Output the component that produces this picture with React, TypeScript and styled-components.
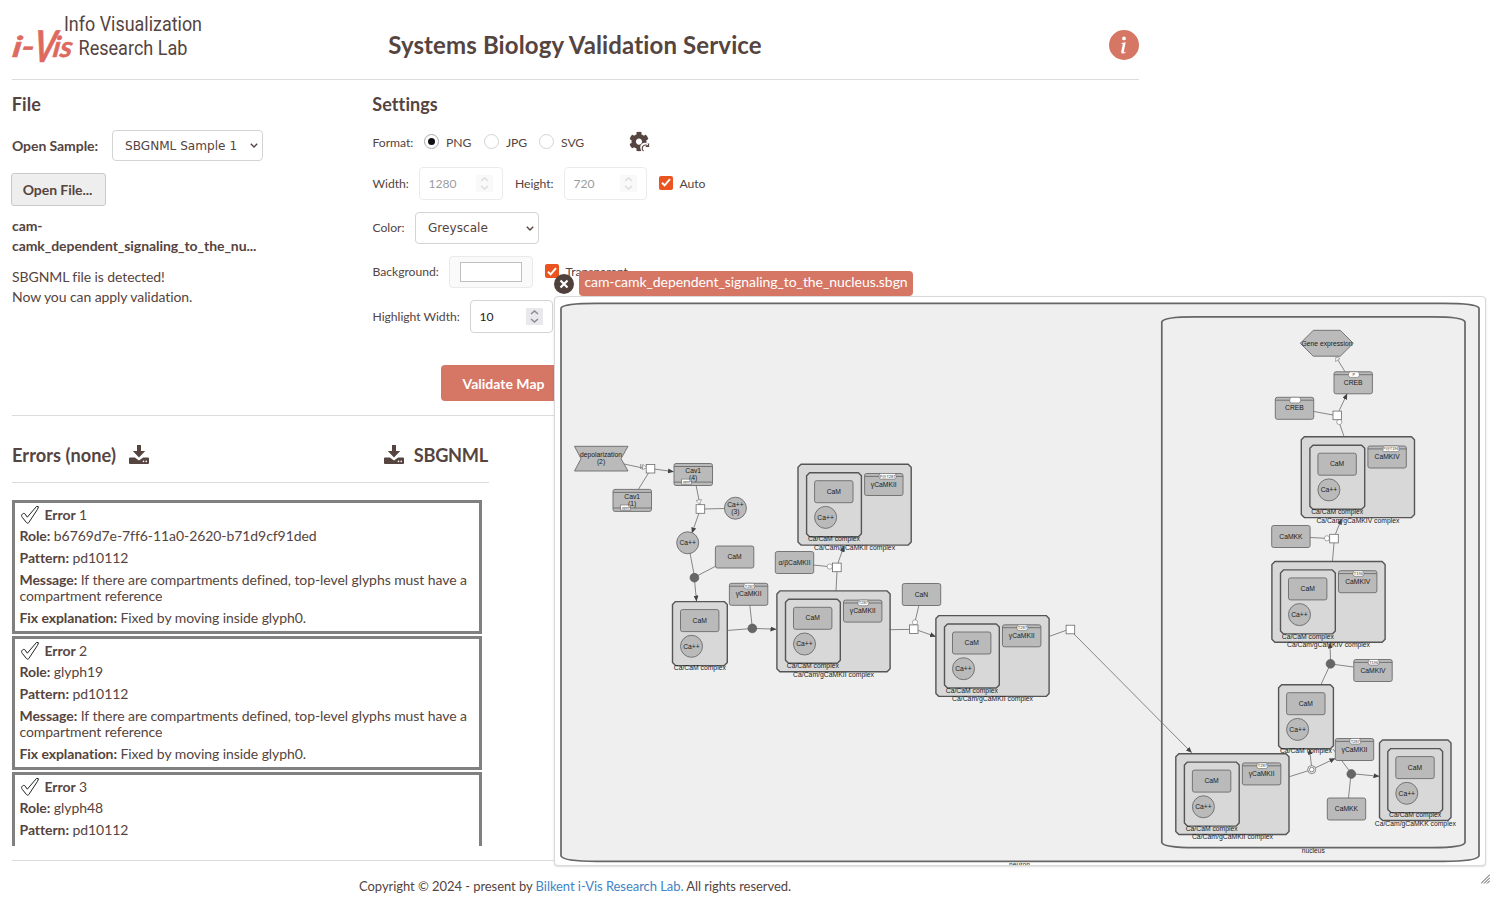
import React from 'react';
import styled, { createGlobalStyle, css } from 'styled-components';
import { BsInfoCircleFill } from 'react-icons/bs';
import { FaCog } from 'react-icons/fa';

const INK = '#554440';
const CORAL = '#d67664';

const Global = createGlobalStyle`
  *, *::before, *::after { box-sizing: border-box; }
  html, body { margin: 0; padding: 0; background: #fff; }
  body {
    width: 1490px; height: 900px; overflow: hidden; position: relative;
    font-family: Lato, "Liberation Sans", sans-serif; color: ${INK}; font-size: 14px;
    font-variant-ligatures: none; letter-spacing: -0.07px;
  }
`;

const Page = styled.div`
  width: 1139px;
  height: 900px;
  padding-left: 12px;
  display: flex;
  flex-direction: column;
`;
const Header = styled.header`
  height: 80px;
  flex: none;
  border-bottom: 1px solid #dcdcdc;
  display: grid;
  grid-template-columns: 200px 1fr 200px;
  padding-top: 10px;
`;
const Logo = styled.svg`
  display: block;
  width: 200px;
  height: 60px;
  overflow: visible;
  letter-spacing: 0;
`;
const Title = styled.h1`
  margin: 0 0 0 -1px;
  font-size: 24px;
  line-height: 70px;
  font-weight: 700;
  text-align: center;
  letter-spacing: 0.13px;
`;
const InfoButton = styled.div`
  display: flex;
  justify-content: flex-end;
  align-items: flex-start;
  padding-top: 20px;
  color: ${CORAL};
`;
const Top = styled.section`
  height: 336px;
  flex: none;
  display: grid;
  grid-template-columns: 360.5px 1fr;
  border-bottom: 1px solid #dcdcdc;
`;
const Column = styled.div`
  display: flex;
  flex-direction: column;
  align-items: flex-start;
`;
const Heading = styled.h2`
  margin: 12px 0 0 -0.2px;
  font-size: 18px;
  line-height: 24px;
  font-weight: 700;
  letter-spacing: 0.08px;
`;
const Line = styled.div<{ $mt?: number; $h: number }>`
  display: flex;
  align-items: center;
  height: ${p => p.$h}px;
  margin-top: ${p => p.$mt ?? 0}px;
`;
const Strong = styled.span<{ $w: number }>`
  width: ${p => p.$w}px;
  font-weight: 700;
  white-space: nowrap;
`;
const Label = styled.span<{ $w: number; $up?: boolean }>`
  width: ${p => p.$w}px;
  padding-bottom: ${p => (p.$up ? 2 : 0)}px;
  font-size: 12.2px;
  white-space: nowrap;
  flex: none;
  letter-spacing: -0.05px;
`;
const frame = css`
  border: 1px solid #d4d4d5;
  border-radius: 4px;
  background: #fff;
`;
const SelectBox = styled.div<{ $w: number; $h: number }>`
  ${frame}
  width: ${p => p.$w}px;
  height: ${p => p.$h}px;
  display: flex;
  align-items: center;
  justify-content: space-between;
  padding: 0 4.5px 0 12px;
  font: 12.1px/18px "DejaVu Sans", sans-serif;
  letter-spacing: 0;
`;
const OpenButton = styled.button`
  margin: 12px 0 0 -1px;
  width: 95px;
  height: 33px;
  padding: 0 2px 0 0;
  border: 1px solid #c9c9c9;
  border-radius: 3px;
  background: #eee;
  color: ${INK};
  font: 700 14px Lato, sans-serif;
  letter-spacing: -0.07px;
`;
const FileName = styled.div`
  margin-top: 10px;
  width: 250px;
  font-weight: 700;
  line-height: 20px;
`;
const Notice = styled.div`
  margin-top: 11px;
  line-height: 20px;
  letter-spacing: -0.08px;
`;
const NumberBox = styled.div<{ $w: number; $off?: boolean; $mr?: number }>`
  ${frame}
  width: ${p => p.$w}px;
  height: 33px;
  flex: none;
  margin-right: ${p => p.$mr ?? 0}px;
  opacity: ${p => (p.$off ? 0.45 : 1)};
  display: flex;
  align-items: center;
  justify-content: space-between;
  padding: 0 9px 0 8.5px;
  color: #222;
  font-size: 12.1px;
  letter-spacing: 0;
`;
const Spinner = styled.span<{ $off?: boolean }>`
  display: grid;
  place-items: center;
  width: 17px;
  height: 17px;
  background: ${p => (p.$off ? '#f3f3f4' : '#e9e9ed')};
`;
const RadioMark = styled.span<{ $on?: boolean }>`
  display: grid;
  place-items: center;
  width: 15px;
  height: 15px;
  margin: 0 7px 2px 0;
  flex: none;
  border: 1px solid ${p => (p.$on ? '#aaa' : '#d4d4d5')};
  border-radius: 50%;
  &::after {
    content: '';
    width: 7px;
    height: 7px;
    border-radius: 50%;
    background: ${p => (p.$on ? '#111' : 'transparent')};
  }
`;
const CheckMark = styled.span`
  display: grid;
  place-items: center;
  width: 14px;
  height: 14px;
  margin: 0 6.5px 2px 0;
  flex: none;
  border-radius: 2px;
  background: #e95420;
`;
const Swatch = styled.div`
  width: 84px;
  height: 32px;
  flex: none;
  display: grid;
  place-items: center;
  margin-right: 12px;
  border: 1px solid #e9e9ea;
  border-radius: 4px;
  background: #fafafa;
  &::after {
    content: '';
    width: 62px;
    height: 20px;
    border: 1px solid #c0c0c0;
    background: #fff;
  }
`;
const ValidateButton = styled.button`
  margin: 32px 0 0 68.5px;
  width: 125px;
  height: 36px;
  padding: 0;
  border: 0;
  border-radius: 4px;
  background: ${CORAL};
  color: #fff;
  font: 700 14px Lato, sans-serif;
`;
const Report = styled.section`
  width: 477px;
  height: 444px;
  flex: none;
`;
const ReportHead = styled.div`
  height: 67px;
  padding: 11px 1px 0 0;
  border-bottom: 1px solid #dcdcdc;
  display: flex;
  justify-content: space-between;
  align-items: center;
  font-size: 18.2px;
  font-weight: 700;
`;
const ReportTitle = styled.div<{ $gap: number; $track: number }>`
  display: flex;
  align-items: center;
  gap: ${p => p.$gap}px;
  letter-spacing: ${p => p.$track}px;
`;
const ErrorList = styled.div`
  margin-top: 17px;
  width: 470px;
  height: 346px;
  overflow: hidden;
  display: flex;
  flex-direction: column;
  gap: 2px;
`;
const ErrorCard = styled.article`
  flex: none;
  height: 134px;
  border: 3px solid #808080;
  padding: 1px 4.5px 0;
  line-height: 16px;
`;
const ErrorTitle = styled.div`
  display: flex;
  align-items: center;
  height: 22px;
  margin-bottom: 2px;
  gap: 5px;
  white-space: pre;
`;
const Detail = styled.div`
  margin-bottom: 6px;
`;
const Footer = styled.footer`
  border-top: 1px solid #dcdcdc;
  height: 40px;
  line-height: 51px;
  font-size: 13px;
  text-align: center;
  padding-right: 1px;
  letter-spacing: -0.06px;
`;
const Link = styled.a`
  color: #4183c4;
`;

/* Floating, resizable map window */
const Viewer = styled.div`
  position: absolute;
  left: 554px;
  top: 296px;
  width: 932px;
  height: 570px;
  border: 1px solid #d8d8d9;
  border-radius: 4px;
  background: #fff;
  box-shadow: 0 1px 2px rgba(34, 36, 38, 0.15);
`;
const Map = styled.svg`
  display: block;
  width: 930px;
  height: 568px;
  font-family: "Liberation Sans", sans-serif;
  font-size: 6.75px;
  text-anchor: middle;
  letter-spacing: 0;
`;
const CloseIcon = styled.svg`
  position: absolute;
  left: 554px;
  top: 274px;
`;
const Tab = styled.div`
  position: absolute;
  left: 579px;
  top: 271px;
  width: 334px;
  height: 25px;
  border-radius: 4px;
  background: ${CORAL};
  color: #fff;
  font-size: 14px;
  line-height: 22px;
  text-align: center;
  white-space: nowrap;
`;
const Grip = styled.svg`
  position: absolute;
  left: 1481px;
  top: 874px;
`;

const Caret = () => (
  <svg width="8" height="7" viewBox="0 0 8 7"><path d="M.8 1.8L4 5l3.200-3.200" fill="none" stroke="#554440" strokeWidth="1.4" /></svg>
);
const Arrows = ({ off }: { off?: boolean }) => (
  <Spinner $off={off}>
    <svg width="9" height="13" viewBox="0 0 9 13"><path d="M1 4l3.5-3L8 4M1 9l3.5 3L8 9" fill="none" stroke={off ? '#b5b5bb' : '#8a8a94'} strokeWidth="1.5" /></svg>
  </Spinner>
);
const Checked = () => (
  <CheckMark><svg width="10" height="9" viewBox="0 0 10 9"><path d="M1 4.8L3.6 7.4 9 1.2" fill="none" stroke="#fff" strokeWidth="2" /></svg></CheckMark>
);
const Download = () => (
  <svg width="20" height="19" viewBox="0 0 20 19" fill={INK}>
    <path d="M8 0h4v6h4.2L10 12.4 3.8 6H8zM1 12.4h4.8L10 15.6l4.2-3.2H19a1 1 0 0 1 1 1V18a1 1 0 0 1-1 1H1a1 1 0 0 1-1-1v-4.6a1 1 0 0 1 1-1z" />
    <circle cx="14.5" cy="16.4" r=".8" fill="#fff" /><circle cx="17.2" cy="16.4" r=".8" fill="#fff" />
  </svg>
);
const Tick = () => (
  <svg width="20" height="20" viewBox="0 0 20 20"><path d="M1.8 9.8c1-1.6 2.3-1.800 3.200-.9l2.300 3.300L16.500 1.400l2 .3-1 2.600L8.800 17.500c-.8 1-1.800.9-2.400 0L2.300 12.300c-.8-1-.9-1.700-.5-2.500z" fill="#fff" stroke="#222" strokeWidth="1" strokeLinejoin="round" /></svg>
);

type P = { x: number; y: number };
const T = ({ x, y, s, w }: P & { s: string; w?: number }) => (
  <text x={x} y={y + 2.3} fill="#1c1c1c" textLength={w} lengthAdjust="spacingAndGlyphs">{s}</text>
);
const Pill = ({ x, y, s, w = 11.5 }: P & { s: string; w?: number }) => (
  <g>
    <rect x={x - w / 2} y={y - 2.8} width={w} height={5.6} rx={2} fill="#fff" stroke="#666" strokeWidth=".6" />
    <text x={x} y={y + 1.4} fontSize="4" fill="#333">{s}</text>
  </g>
);
const Macro = ({ x, y, s, tag }: P & { s: string; tag?: string }) => {
  const long = (tag?.length ?? 0) > 4;
  return (
    <g>
      <rect x={x} y={y} width={38.4} height={22} rx={2} fill="#bababa" stroke="#6b6b6b" strokeWidth=".9" />
      {tag !== undefined && <path d={`M${x} ${y + 2.9}h38.4`} stroke="#6b6b6b" strokeWidth=".9" />}
      {tag !== undefined && <Pill x={x + (long ? 23 : 19.9)} y={y + 2.8} s={tag} w={long ? 17 : 10.8} />}
      <T x={x + 19.2} y={y + 10.8} s={s} />
    </g>
  );
};
const Ion = ({ x, y, n }: P & { n?: string }) => (
  <g>
    <circle cx={x} cy={y} r={11} fill="#bababa" stroke="#6b6b6b" strokeWidth=".9" />
    <T x={x} y={n ? y - 3.5 : y} s="Ca++" />
    {n && <T x={x} y={y + 3.3} s={n} />}
  </g>
);
const Box = ({ x, y, w, h }: P & { w: number; h: number }) => (
  <path d={`M${x + 3} ${y}h${w - 6}l3 3v${h - 6}l-3 3h${6 - w}l-3-3v${6 - h}z`} fill="#d8d8d8" stroke="#555" strokeWidth="1.4" strokeLinejoin="round" />
);
const CamComplex = ({ x, y }: P) => (
  <g>
    <Box x={x} y={y} w={54.8} h={64} />
    <Macro x={x + 8} y={y + 8} s="CaM" />
    <Ion x={x + 19} y={y + 44.7} />
    <T x={x + 27.3} y={y + 66.4} s="Ca/CaM complex" w={52} />
  </g>
);
const BigComplex = ({ x, y, kind, tag }: P & { kind: string; tag: string }) => (
  <g>
    <Box x={x} y={y} w={113.2} h={80.8} />
    <CamComplex x={x + 8.6} y={y + 8.4} />
    <Macro x={x + 66.6} y={y + 9.2} s={kind} tag={tag} />
    <T x={x + 56.6} y={y + 83.4} s={`Ca/Cam/g${kind.replace('γ', '')} complex`} w={kind === 'CaMKIV' ? 83 : 81} />
  </g>
);
const Proc = ({ x, y }: P) => <rect x={x - 4.3} y={y - 4.3} width={8.6} height={8.6} fill="#fff" stroke="#6b6b6b" strokeWidth=".8" />;
const Assoc = ({ x, y }: P) => <circle cx={x} cy={y} r={4.4} fill="#666" stroke="#555" strokeWidth=".6" />;
const Cat = ({ x, y }: P) => <circle cx={x} cy={y} r={2.6} fill="#fff" stroke="#777" strokeWidth=".6" />;

const plainEdges = [
  [624, 464, 645, 468.5], [638, 490, 648.5, 473], [696, 485, 700, 505], [704, 509, 725, 508.5],
  [690, 553, 694, 574], [695, 577, 716, 566], [749.7, 604, 752, 625], [727, 630.5, 752, 628.5],
  [836, 591, 837, 571], [813, 565, 833, 567], [889, 629.7, 910, 629.4], [919, 605, 914, 626],
  [1049, 636.5, 1067, 630], [1345, 371.7, 1336, 357], [1313, 411.3, 1333, 415], [1344, 436.5, 1338, 419],
  [1310, 537.5, 1330, 538.5], [1332.5, 561, 1334, 543], [1353.5, 667, 1331, 664], [1321, 684.5, 1330, 665],
  [1289, 776.8, 1312, 769.5], [1333, 749, 1351, 773], [1348.5, 798, 1351, 774],
];
const arrowEdges = [
  [654, 469, 673.5, 471.7], [699, 513, 692, 533], [694.5, 580, 696.5, 601], [756, 628.5, 776, 629.2],
  [838, 563, 844, 546], [917, 630, 935.5, 636.5], [1074, 634, 1191.5, 752.5], [1339, 411, 1347, 394],
  [1335.5, 534, 1341.5, 519], [1330.5, 660, 1330, 643], [1315, 768, 1335, 758.5], [1311.5, 766, 1309.5, 749],
  [1355, 774, 1379, 776.3],
];

const MapDrawing = () => (
  <Map viewBox="555 297 930 568">
    <defs>
      <marker id="tip" viewBox="0 0 6 5" markerWidth="6" markerHeight="5" refX="5.5" refY="2.5" orient="auto" markerUnits="userSpaceOnUse">
        <path d="M0 0L6 2.5 0 5z" fill="#444" />
      </marker>
    </defs>
    <g fill="#efefef" stroke="#666" strokeWidth="1.7">
      <path d="M561 308Q563 303.300 597 303.300H1443Q1477 303.300 1479 308V856Q1477 861.300 1443 861.300H597Q563 861.300 561 856z" />
      <path d="M1161.800 322Q1163 316.900 1195 316.900H1432Q1464 316.900 1465 322V842.500Q1464 847.600 1432 847.600H1195Q1163 847.600 1161.800 842.500z" />
    </g>
    <T x={1313.3} y={850.9} s="nucleus" w={23} />
    <T x={1019.5} y={864.6} s="neuron" />
    <BigComplex x={798} y={464.3} kind="γCaMKII" tag="P@T287" />
    <BigComplex x={776.9} y={590.9} kind="γCaMKII" tag="T287" />
    <BigComplex x={935.9} y={615.6} kind="γCaMKII" tag="T287" />
    <BigComplex x={1301.3} y={436.8} kind="CaMKIV" tag="P@T196" />
    <BigComplex x={1271.9} y={561.5} kind="CaMKIV" tag="T196" />
    <BigComplex x={1175.8} y={753.7} kind="γCaMKII" tag="T287" />
    <Box x={1379.5} y={740} w={71.5} h={80.5} />
    <CamComplex x={1387.8} y={748.6} />
    <T x={1415.3} y={823.3} s="Ca/Cam/gCaMKK complex" w={81} />
    <CamComplex x={672.5} y={601.6} />
    <CamComplex x={1278.6} y={684.7} />
    <g stroke="#6b6b6b" strokeWidth=".8">
      {plainEdges.map(([a, b, c, d], i) => <path key={i} d={`M${a} ${b}L${c} ${d}`} />)}
      {arrowEdges.map(([a, b, c, d], i) => <path key={i} d={`M${a} ${b}L${c} ${d}`} markerEnd="url(#tip)" />)}
    </g>
    <g fill="#bababa" stroke="#6b6b6b" strokeWidth=".9">
      <path d="M574.5 446.300H628L621 458.700 628 471H574.500L581 458.700z" />
      <path d="M1300.300 343.300L1313.300 330.300H1340.300L1353.300 343.300 1340.300 356.200H1313.300z" />
    </g>
    <T x={601} y={454.8} s="depolarization" w={42} />
    <T x={601} y={461.5} s="(2)" />
    <T x={1327} y={343.2} s="Gene expression" w={51} />
    {[{ x: 674, y: 463.5, n: '(4)' }, { x: 613, y: 489.4, n: '(1)' }].map(c => (
      <g key={c.n}>
        <rect x={c.x} y={c.y} width={38.5} height={22} rx={2} fill="#bababa" stroke="#6b6b6b" strokeWidth=".9" />
        <path d={`M${c.x} ${c.y + 3}h38.5M${c.x} ${c.y + 18.6}h38.5`} stroke="#6b6b6b" strokeWidth=".9" />
        <rect x={c.x + 7.7} y={c.y + 15.6} width={9.6} height={5} fill="#fff" stroke="#666" strokeWidth=".6" />
        <text x={c.x + 12.5} y={c.y + 19.3} fontSize="3.2" fill="#333">open</text>
        <T x={c.x + 19.2} y={c.y + 7.6} s="Cav1" />
        <T x={c.x + 19.2} y={c.y + 14.6} s={c.n} />
      </g>
    ))}
    <Ion x={735.4} y={508.2} n="(3)" />
    <Ion x={687.7} y={542.8} />
    <Macro x={715.4} y={546} s="CaM" />
    <Macro x={729.4} y={583.3} s="γCaMKII" tag="T287" />
    <Macro x={775.3} y={551.5} s="α/βCaMKII" />
    <Macro x={902.3} y={583.5} s="CaN" />
    <Macro x={1334} y={371.8} s="CREB" tag="P" />
    <Macro x={1275.3} y={397.3} s="CREB" tag="" />
    <Macro x={1271.7} y={525.5} s="CaMKK" />
    <Macro x={1353.8} y={659.5} s="CaMKIV" tag="T196" />
    <Macro x={1335.3} y={738.5} s="γCaMKII" tag="T287" />
    <Macro x={1327.3} y={798} s="CaMKK" />
    <g fill="#fff" stroke="#777" strokeWidth=".6">
      <path d="M640.5 464v5M642 464.200v5M643 464.500L647 467.700 642.500 469.500z" />
      <path d="M696 500.500L701.500 499.500 699.700 504z" />
      <path d="M1335.500 361.500L1340 358.500 1336 357z" />
    </g>
    <Cat x={829.7} y={566.5} /><Cat x={915} y={622.3} /><Cat x={1339.3} y={422} /><Cat x={1327} y={538.3} />
    <Proc x={650.5} y={468.7} /><Proc x={700.4} y={509} /><Proc x={836.9} y={567.4} />
    <Proc x={913.7} y={629.2} /><Proc x={1070.4} y={629.5} /><Proc x={1337.3} y={415.4} /><Proc x={1334} y={538.6} />
    <Assoc x={694.4} y={577.7} /><Assoc x={752.3} y={628.4} /><Assoc x={1330.5} y={663.8} /><Assoc x={1351.3} y={774} />
    <g fill="#fff" stroke="#666" strokeWidth=".8"><circle cx="1311.7" cy="769.6" r="4" /><circle cx="1311.7" cy="769.6" r="2.3" /></g>
  </Map>
);

const errors = [
  { n: 1, role: 'b6769d7e-7ff6-11a0-2620-b71d9cf91ded' },
  { n: 2, role: 'glyph19' },
  { n: 3, role: 'glyph48' },
];

export default function App() {
  return (
    <>
      <Global />
      <Page>
        <Header>
          <Logo viewBox="12 10 200 60">
            <text x="64" y="30.5" fontFamily="Roboto, sans-serif" fontSize="19.5" fill={INK} textLength="138" lengthAdjust="spacingAndGlyphs">Info Visualization</text>
            <text x="78.5" y="54.5" fontFamily="Roboto, sans-serif" fontSize="19.5" fill={INK} textLength="109" lengthAdjust="spacingAndGlyphs">Research Lab</text>
            <g transform="skewX(-8)" fontFamily="Lato, sans-serif" fontStyle="italic" fontWeight="700" fill="#de6a5f" stroke="#de6a5f" strokeWidth=".5" strokeLinejoin="round">
              <text x="19.5" y="57" fontSize="29" textLength="22" lengthAdjust="spacingAndGlyphs">i-</text>
              <text x="41" y="62.5" fontSize="44" textLength="22" lengthAdjust="spacingAndGlyphs">V</text>
              <text x="60" y="57.5" fontSize="29" textLength="19.5" lengthAdjust="spacingAndGlyphs">is</text>
            </g>
          </Logo>
          <Title>Systems Biology Validation Service</Title>
          <InfoButton><BsInfoCircleFill size={30} /></InfoButton>
        </Header>
        <Top>
          <Column>
            <Heading>File</Heading>
            <Line $mt={14} $h={31}>
              <Strong $w={100}>Open Sample:</Strong>
              <SelectBox $w={151} $h={31}>SBGNML Sample 1<Caret /></SelectBox>
            </Line>
            <OpenButton>Open File...</OpenButton>
            <FileName>cam-<br />camk_dependent_signaling_to_the_nu...</FileName>
            <Notice>SBGNML file is detected!<br />Now you can apply validation.</Notice>
          </Column>
          <Column>
            <Heading>Settings</Heading>
            <Line $mt={14} $h={24}>
              <Label $w={51.5}>Format:</Label>
              <RadioMark $on /><Label $w={38}>PNG</Label>
              <RadioMark /><Label $w={33}>JPG</Label>
              <RadioMark /><Label $w={67.5}>SVG</Label>
              <svg width="22" height="22" viewBox="0 0 22 22">
                <FaCog size={20} color={INK} x="0" y="0.5" />
                <circle cx="16" cy="16.5" r="4.8" fill="#fff" />
                <path d="M14.500 20a3.300 3.300 0 1 1 4.300-5.300M19.600 12.600v2.900h-2.900" fill="none" stroke={INK} strokeWidth="1.1" />
              </svg>
            </Line>
            <Line $mt={13} $h={33}>
              <Label $w={46.5}>Width:</Label>
              <NumberBox $w={84} $off $mr={12}>1280<Arrows off /></NumberBox>
              <Label $w={49}>Height:</Label>
              <NumberBox $w={83} $off $mr={12}>720<Arrows off /></NumberBox>
              <Checked /><Label $w={40}>Auto</Label>
            </Line>
            <Line $mt={12} $h={32}>
              <Label $w={42.5} $up>Color:</Label>
              <SelectBox $w={124} $h={32}>Greyscale<Caret /></SelectBox>
            </Line>
            <Line $mt={12} $h={32}>
              <Label $w={76.5} $up>Background:</Label>
              <Swatch />
              <Checked /><Label $w={80} $up>Transparent</Label>
            </Line>
            <Line $mt={12} $h={33}>
              <Label $w={97.5}>Highlight Width:</Label>
              <NumberBox $w={83}>10<Arrows /></NumberBox>
            </Line>
            <ValidateButton>Validate Map</ValidateButton>
          </Column>
        </Top>
        <Report>
          <ReportHead>
            <ReportTitle $gap={13} $track={0.05}>Errors (none)<Download /></ReportTitle>
            <ReportTitle $gap={10} $track={-0.25}><Download />SBGNML</ReportTitle>
          </ReportHead>
          <ErrorList>
            {errors.map(e => (
              <ErrorCard key={e.n}>
                <ErrorTitle><Tick /><span><b>Error</b> {e.n}</span></ErrorTitle>
                <Detail><b>Role:</b> {e.role}</Detail>
                <Detail><b>Pattern:</b> pd10112</Detail>
                <Detail><b>Message:</b> If there are compartments defined, top-level glyphs must have a compartment reference</Detail>
                <Detail><b>Fix explanation:</b> Fixed by moving inside glyph0.</Detail>
              </ErrorCard>
            ))}
          </ErrorList>
        </Report>
        <Footer>Copyright © 2024 - present by <Link>Bilkent i-Vis Research Lab.</Link> All rights reserved.</Footer>
      </Page>
      <Viewer><MapDrawing /></Viewer>
      <Tab>cam-camk_dependent_signaling_to_the_nucleus.sbgn</Tab>
      <CloseIcon width="20" height="20" viewBox="0 0 20 20">
        <circle cx="10" cy="10" r="10" fill="#4f403c" />
        <path d="M6.5 6.5l7 7M13.5 6.5l-7 7" stroke="#fff" strokeWidth="2.2" />
      </CloseIcon>
      <Grip width="9" height="10" viewBox="0 0 9 10"><path d="M0 9.5L9 .5M3 9.5L9 3.5M6 9.5L9 6.5" stroke="#555" strokeWidth="1" /></Grip>
    </>
  );
}
